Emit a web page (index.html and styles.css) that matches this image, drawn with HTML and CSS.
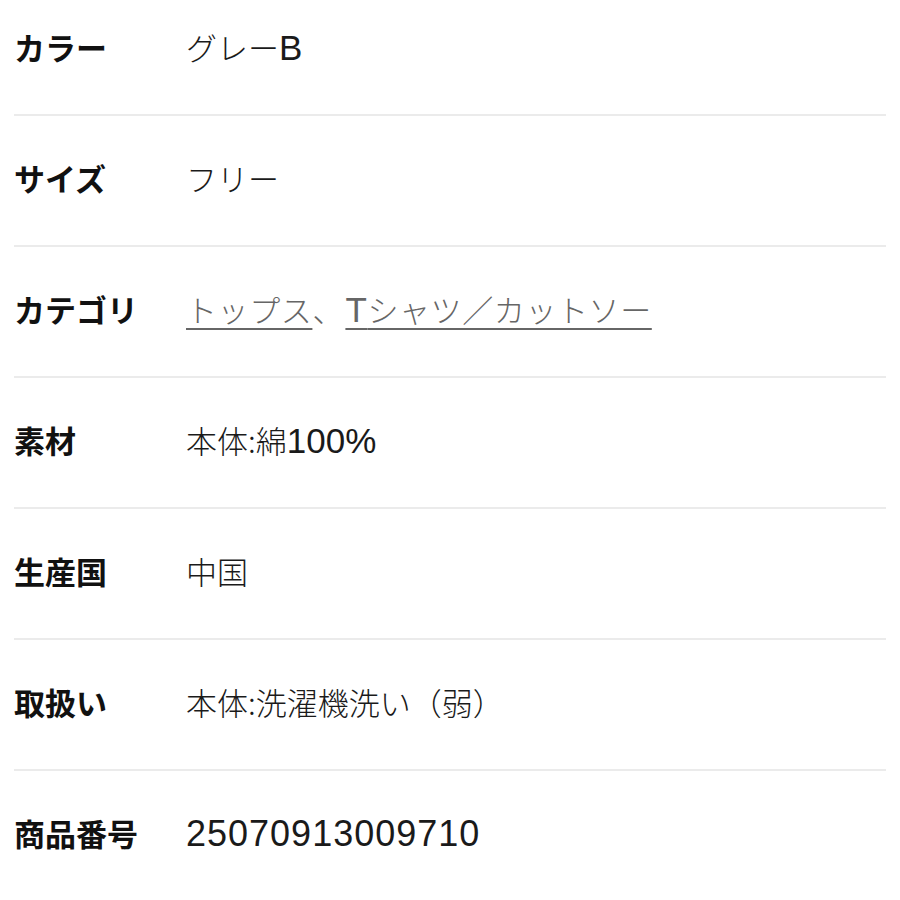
FILE: index.html
```html
<!DOCTYPE html>
<html lang="ja">
<head>
<meta charset="utf-8">
<link rel="stylesheet" href="styles.css">
</head>
<body>
<dl class="spec">
  <div class="row"><dt class="label">カラー</dt><dd class="value">グレー<span class="latin">B</span></dd></div>
  <div class="row"><dt class="label">サイズ</dt><dd class="value">フリー</dd></div>
  <div class="row"><dt class="label">カテゴリ</dt><dd class="value"><a class="link" href="#">トップス</a><span class="sep">、</span><a class="link" href="#"><span class="latin">T</span>シャツ／カットソー</a></dd></div>
  <div class="row"><dt class="label">素材</dt><dd class="value">本体:綿<span class="latin">100%</span></dd></div>
  <div class="row"><dt class="label">生産国</dt><dd class="value">中国</dd></div>
  <div class="row"><dt class="label">取扱い</dt><dd class="value">本体:洗濯機洗い（弱）</dd></div>
  <div class="row last"><dt class="label">商品番号</dt><dd class="value"><span class="latin num">25070913009710</span></dd></div>
</dl>
</body>
</html>
```
FILE: styles.css
```css
html, body {
  margin: 0;
  padding: 0;
  background: #ffffff;
}
body {
  font-family: "Noto Sans CJK JP", sans-serif;
  color: #1a1a1a;
}
.spec {
  margin: 0 14px;
  padding: 0;
}
.row {
  display: flex;
  align-items: center;
  height: 40px;
  padding: 42px 0 47px;
  border-bottom: 2px solid #ebebeb;
}
.row:first-child {
  padding-top: 27px;
}
.row.last {
  border-bottom: none;
}
.label {
  width: 172px;
  flex: none;
  font-family: "Noto Sans CJK JP", sans-serif;
  font-weight: 700;
  font-size: 31px;
  line-height: 40px;
  color: #111;
}
.value {
  margin: 0;
  font-family: "Noto Sans CJK JP", sans-serif;
  font-weight: 300;
  font-size: 31px;
  line-height: 40px;
  color: #1a1a1a;
  white-space: nowrap;
}
.latin {
  font-family: "Liberation Sans", "Noto Sans CJK JP", sans-serif;
  font-weight: 400;
  font-size: 35px;
  line-height: 40px;
}
.num {
  font-size: 36px;
  letter-spacing: 1px;
}
.link {
  color: #666;
  text-decoration: underline;
  text-decoration-thickness: 2px;
  text-underline-offset: 6px;
  letter-spacing: 0.6px;
}
.sep {
  color: #666;
  padding-right: 2px;
}
```
